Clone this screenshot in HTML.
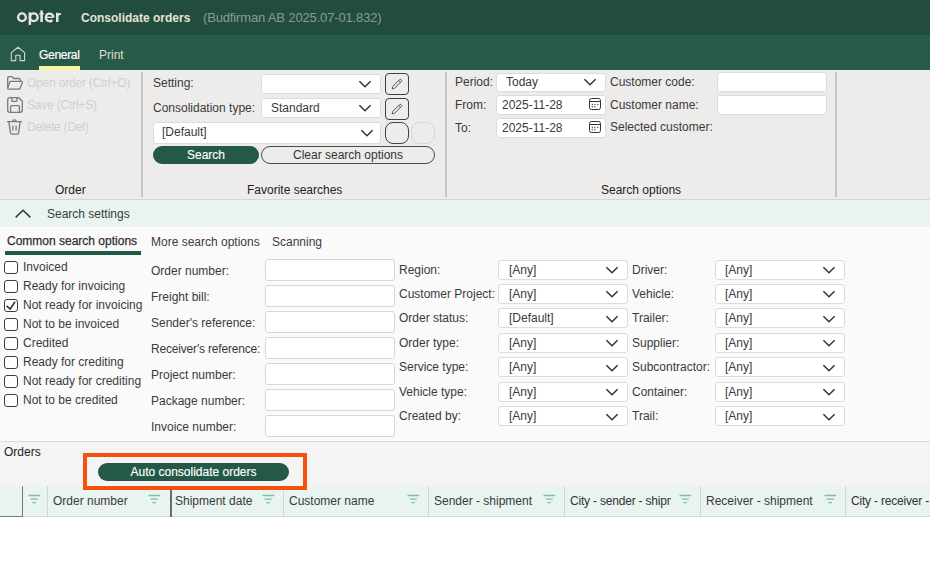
<!DOCTYPE html>
<html><head><meta charset="utf-8">
<style>
*{box-sizing:border-box;margin:0;padding:0}
html,body{width:930px;height:563px;overflow:hidden;background:#fff;font-family:"Liberation Sans",sans-serif;font-size:12px;color:#333}
.a{position:absolute;white-space:nowrap}
.box{position:absolute;border:1px solid #dcdcdc;border-radius:3px;background:#fff}
.vsep{position:absolute;width:2px;background:#c6c6c6}
svg{display:block}
</style></head><body>

<div class="a" style="left:0;top:0;width:930px;height:35px;background:#214c3e"></div>
<svg class="a" style="left:14px;top:8px" width="50" height="20" viewBox="14 8 50 20"><g fill="none" stroke="#e8e6e3"><circle cx="22" cy="17.25" r="3.85" stroke-width="2.4"/><circle cx="33.8" cy="17.25" r="3.85" stroke-width="2.4"/><path d="M53.5 17.35 A3.85 3.85 0 1 0 52.4 20.1" stroke-width="2.3"/><path d="M46 17.3 H53.6" stroke-width="1.4"/><path d="M57.25 16.2 Q57.6 13.8 61 13.8" stroke-width="1.8"/></g><g fill="#e8e6e3"><rect x="28.6" y="12.3" width="2.5" height="12.6"/><rect x="40.3" y="10.4" width="2.6" height="11.6"/><rect x="39.2" y="13" width="4.6" height="1.5"/><rect x="56" y="12.8" width="2.5" height="9.2"/></g></svg>
<div class="a" style="left:81px;top:11px;font-size:12px;line-height:14px;color:#e6e2d6;font-weight:bold">Consolidate orders</div>
<div class="a" style="left:203px;top:10px;font-size:13px;line-height:15px;color:#8a9c92;letter-spacing:-0.15px">(Budfirman AB 2025.07-01.832)</div>
<div class="a" style="left:0;top:35px;width:930px;height:35px;background:#275a48"></div>
<svg class="a" style="left:10px;top:46px" width="16" height="16" viewBox="0 0 16 16"><path d="M1.3 6.6 L8 1.2 L14.6 6.6 V14.6 H10 V9.2 H5.8 V14.6 H1.3 Z" fill="none" stroke="#d4d4d4" stroke-width="1.1" stroke-linejoin="round"/></svg>
<div class="a" style="left:39px;top:48px;font-size:12px;line-height:14px;color:#ffffff;letter-spacing:-0.3px;-webkit-text-stroke:0.2px #fff">General</div>
<div class="a" style="left:39px;top:66px;width:41px;height:4px;background:#f7f5a3"></div>
<div class="a" style="left:99px;top:48px;font-size:12px;line-height:14px;color:#e3dfcf;">Print</div>
<div class="a" style="left:0;top:70px;width:930px;height:130px;background:#edecea;border-bottom:1px solid #dad4d4"></div>
<div class="vsep" style="left:141px;top:72px;height:125px"></div>
<div class="vsep" style="left:445px;top:72px;height:125px"></div>
<div class="vsep" style="left:835px;top:72px;height:125px"></div>
<svg class="a" style="left:7px;top:76px" width="16" height="14" viewBox="0 0 16 14"><path d="M0.7 11.5 V2.2 Q0.7 0.6 2.3 0.6 H4.3 Q5.1 0.6 5.7 1.3 L6.7 2.5 H11.6 Q12.6 2.5 13.1 3.6 L13.5 4.6" fill="none" stroke="#7a7a7a" stroke-width="1.3" stroke-linejoin="round" stroke-linecap="round"/><path d="M3.7 5.3 H14.2 Q15.8 5.4 15.2 7 L13.2 12 Q12.7 13.2 11.4 13.2 H2.1 Q0.3 13.2 0.9 11.5 L2.6 6.2 Q2.9 5.3 3.7 5.3 Z" fill="none" stroke="#7a7a7a" stroke-width="1.3" stroke-linejoin="round"/></svg>
<svg class="a" style="left:7px;top:97px" width="16" height="16" viewBox="0 0 16 16"><path d="M2.8 0.7 H11.8 L15.3 4.2 V13.2 Q15.3 15.3 13.2 15.3 H2.8 Q0.7 15.3 0.7 13.2 V2.8 Q0.7 0.7 2.8 0.7 Z" fill="none" stroke="#7a7a7a" stroke-width="1.3" stroke-linejoin="round"/><path d="M4.8 0.8 V3.2 Q4.8 4.4 6 4.4 H8.8 Q10 4.4 10 3.2 V0.8" fill="none" stroke="#7a7a7a" stroke-width="1.3"/><path d="M3.6 15.2 V9.8 Q3.6 8.6 4.8 8.6 H11.2 Q12.4 8.6 12.4 9.8 V15.2" fill="none" stroke="#7a7a7a" stroke-width="1.3"/></svg>
<svg class="a" style="left:7px;top:119px" width="15" height="16" viewBox="0 0 15 16"><path d="M0.6 2.6 H14.4" fill="none" stroke="#7a7a7a" stroke-width="1.3" stroke-linecap="round"/><path d="M5.6 2.4 Q6 0.8 7.5 0.8 Q9 0.8 9.4 2.4" fill="none" stroke="#7a7a7a" stroke-width="1.2"/><path d="M1.9 2.8 L3.4 13.6 Q3.6 15.2 5.2 15.2 H9.8 Q11.4 15.2 11.6 13.6 L13.1 2.8" fill="none" stroke="#7a7a7a" stroke-width="1.3" stroke-linejoin="round"/><path d="M5.9 6.4 V11.8 M9.1 6.4 V11.8" stroke="#7a7a7a" stroke-width="1.2"/></svg>
<div class="a" style="left:27px;top:76px;font-size:12px;line-height:14px;color:#d0d0d0;letter-spacing:-0.2px">Open order (Ctrl+O)</div>
<div class="a" style="left:27px;top:98px;font-size:12px;line-height:14px;color:#d0d0d0;letter-spacing:-0.2px">Save (Ctrl+S)</div>
<div class="a" style="left:27px;top:120px;font-size:12px;line-height:14px;color:#d0d0d0;letter-spacing:-0.2px">Delete (Del)</div>
<div class="a" style="left:55px;top:183px;font-size:12px;line-height:14px;color:#1c1c24;">Order</div>
<div class="a" style="left:153px;top:76px;font-size:12px;line-height:14px;color:#3a3a3a;">Setting:</div>
<div class="box" style="left:261px;top:74px;width:120px;height:20px;background:#fff;border-color:#dcdcdc"><svg class="a" style="left:96px;top:4.8px" width="14" height="8" viewBox="0 0 14 8"><path d="M1.4 1.3 L7 6.7 L12.6 1.3" fill="none" stroke="#333" stroke-width="1.5"/></svg></div>
<div class="a" style="left:153px;top:101px;font-size:12px;line-height:14px;color:#3a3a3a;">Consolidation type:</div>
<div class="box" style="left:261px;top:98px;width:120px;height:20px;background:#fff;border-color:#dcdcdc"><div class="a" style="left:9px;top:2px;line-height:14px;color:#3a3a3a">Standard</div><svg class="a" style="left:96px;top:4.8px" width="14" height="8" viewBox="0 0 14 8"><path d="M1.4 1.3 L7 6.7 L12.6 1.3" fill="none" stroke="#333" stroke-width="1.5"/></svg></div>
<div class="box" style="left:153px;top:122px;width:228px;height:22px;background:#fff;border-color:#dcdcdc"><div class="a" style="left:8px;top:2px;line-height:14px;color:#3a3a3a">[Default]</div><svg class="a" style="left:206px;top:6px" width="14" height="8" viewBox="0 0 14 8"><path d="M1.4 1.3 L7 6.7 L12.6 1.3" fill="none" stroke="#333" stroke-width="1.5"/></svg></div>
<div class="a" style="left:385px;top:73px;width:24px;height:22px;border:1.3px solid #404040;border-radius:4px"><svg class="a" style="left:4.7px;top:3.7px" width="12" height="12" viewBox="0 0 12 12"><path d="M1.2 10.8 L1.6 8.6 L8.4 1.8 Q9.3 0.9 10.2 1.8 Q11.1 2.7 10.2 3.6 L3.4 10.4 Z" fill="none" stroke="#444" stroke-width="0.9" stroke-linejoin="round"/><path d="M7.6 2.6 L9.4 4.4" stroke="#444" stroke-width="0.8"/></svg></div>
<div class="a" style="left:385px;top:98px;width:24px;height:22px;border:1.3px solid #404040;border-radius:4px"><svg class="a" style="left:4.7px;top:3.7px" width="12" height="12" viewBox="0 0 12 12"><path d="M1.2 10.8 L1.6 8.6 L8.4 1.8 Q9.3 0.9 10.2 1.8 Q11.1 2.7 10.2 3.6 L3.4 10.4 Z" fill="none" stroke="#444" stroke-width="0.9" stroke-linejoin="round"/><path d="M7.6 2.6 L9.4 4.4" stroke="#444" stroke-width="0.8"/></svg></div>
<div class="a" style="left:385px;top:122px;width:24px;height:22px;border:1.3px solid #404040;border-radius:8px"></div>
<div class="a" style="left:411px;top:122px;width:24px;height:22px;border:1.3px solid #d6d6d6;border-radius:8px"></div>
<div class="a" style="left:153px;top:146px;width:106px;height:18px;border-radius:9px;background:#245847;color:#fff;text-align:center;line-height:19px;-webkit-text-stroke:0.15px #fff">Search</div>
<div class="a" style="left:261px;top:146px;width:174px;height:18px;border-radius:9px;border:1.2px solid #4a4a4a;color:#333;text-align:center;line-height:17px">Clear search options</div>
<div class="a" style="left:247px;top:183px;font-size:12px;line-height:14px;color:#1c1c24;">Favorite searches</div>
<div class="a" style="left:455px;top:75px;font-size:12px;line-height:14px;color:#3a3a3a;">Period:</div>
<div class="box" style="left:496px;top:72.5px;width:110px;height:19px;background:#fff;border-color:#dcdcdc"><div class="a" style="left:9px;top:1.5px;line-height:14px;color:#3a3a3a">Today</div><svg class="a" style="left:86px;top:4.6px" width="14" height="8" viewBox="0 0 14 8"><path d="M1.4 1.3 L7 6.7 L12.6 1.3" fill="none" stroke="#333" stroke-width="1.5"/></svg></div>
<div class="a" style="left:455px;top:98px;font-size:12px;line-height:14px;color:#3a3a3a;">From:</div>
<div class="box" style="left:496px;top:95px;width:110px;height:20px"><div class="a" style="left:5px;top:2px;line-height:14px;color:#3a3a3a">2025-11-28</div></div>
<svg class="a" style="left:589px;top:98px" width="12" height="12" viewBox="0 0 12 12"><rect x="0.5" y="0.5" width="11" height="11" rx="2" fill="none" stroke="#333" stroke-width="1"/><path d="M0.5 3.5 H11.5" stroke="#333" stroke-width="1"/><g fill="#555"><rect x="2.7" y="5.9" width="1.3" height="1.2"/><rect x="5.2" y="5.9" width="1.3" height="1.2"/><rect x="8" y="5.9" width="1.3" height="1.2"/><rect x="2.7" y="8.2" width="1.3" height="1.2"/><rect x="5.2" y="8.2" width="1.3" height="1.2"/></g></svg>
<div class="a" style="left:455px;top:121px;font-size:12px;line-height:14px;color:#3a3a3a;">To:</div>
<div class="box" style="left:496px;top:118px;width:110px;height:20px"><div class="a" style="left:5px;top:2px;line-height:14px;color:#3a3a3a">2025-11-28</div></div>
<svg class="a" style="left:589px;top:121px" width="12" height="12" viewBox="0 0 12 12"><rect x="0.5" y="0.5" width="11" height="11" rx="2" fill="none" stroke="#333" stroke-width="1"/><path d="M0.5 3.5 H11.5" stroke="#333" stroke-width="1"/><g fill="#555"><rect x="2.7" y="5.9" width="1.3" height="1.2"/><rect x="5.2" y="5.9" width="1.3" height="1.2"/><rect x="8" y="5.9" width="1.3" height="1.2"/><rect x="2.7" y="8.2" width="1.3" height="1.2"/><rect x="5.2" y="8.2" width="1.3" height="1.2"/></g></svg>
<div class="a" style="left:610px;top:75px;font-size:12px;line-height:14px;color:#3a3a3a;">Customer code:</div>
<div class="box" style="left:717px;top:72px;width:110px;height:19.5px"></div>
<div class="a" style="left:610px;top:98px;font-size:12px;line-height:14px;color:#3a3a3a;">Customer name:</div>
<div class="box" style="left:717px;top:95px;width:110px;height:20px"></div>
<div class="a" style="left:610px;top:120px;font-size:12px;line-height:14px;color:#3a3a3a;">Selected customer:</div>
<div class="a" style="left:601px;top:183px;font-size:12px;line-height:14px;color:#1c1c24;">Search options</div>
<div class="a" style="left:0;top:200px;width:930px;height:27px;background:#e9f3ef"></div>
<svg class="a" style="left:14px;top:208px" width="18" height="11" viewBox="0 0 18 11"><path d="M1.7 9.4 L9 2.3 L16.4 9.4" fill="none" stroke="#363636" stroke-width="1.5"/></svg>
<div class="a" style="left:47px;top:207px;font-size:12px;line-height:14px;color:#3a3a3a;">Search settings</div>
<div class="a" style="left:0;top:227px;width:930px;height:214px;background:#fafafa"></div>
<div class="a" style="left:7px;top:234px;font-size:12px;line-height:14px;color:#2e2e2e;-webkit-text-stroke:0.25px #2e2e2e">Common search options</div>
<div class="a" style="left:5px;top:251px;width:136px;height:4px;background:#1f5a46"></div>
<div class="a" style="left:151px;top:235px;font-size:12px;line-height:14px;color:#3a3a3a;">More search options</div>
<div class="a" style="left:272px;top:235px;font-size:12px;line-height:14px;color:#3a3a3a;">Scanning</div>
<div class="a" style="left:4px;top:261px;width:14px;height:13px;border:1.2px solid #3c3c3c;border-radius:3px;background:#fff"></div>
<div class="a" style="left:23px;top:260px;font-size:12px;line-height:14px;color:#3a3a3a;">Invoiced</div>
<div class="a" style="left:4px;top:280px;width:14px;height:13px;border:1.2px solid #3c3c3c;border-radius:3px;background:#fff"></div>
<div class="a" style="left:23px;top:279px;font-size:12px;line-height:14px;color:#3a3a3a;">Ready for invoicing</div>
<div class="a" style="left:4px;top:299px;width:14px;height:13px;border:1.2px solid #3c3c3c;border-radius:3px;background:#fff"><svg class="a" style="left:-1px;top:-1px" width="14" height="13" viewBox="0 0 14 13"><path d="M2.6 6.8 L6.2 10 L11 2.8" fill="none" stroke="#333" stroke-width="1.6"/></svg></div>
<div class="a" style="left:23px;top:298px;font-size:12px;line-height:14px;color:#3a3a3a;">Not ready for invoicing</div>
<div class="a" style="left:4px;top:318px;width:14px;height:13px;border:1.2px solid #3c3c3c;border-radius:3px;background:#fff"></div>
<div class="a" style="left:23px;top:317px;font-size:12px;line-height:14px;color:#3a3a3a;">Not to be invoiced</div>
<div class="a" style="left:4px;top:337px;width:14px;height:13px;border:1.2px solid #3c3c3c;border-radius:3px;background:#fff"></div>
<div class="a" style="left:23px;top:336px;font-size:12px;line-height:14px;color:#3a3a3a;">Credited</div>
<div class="a" style="left:4px;top:356px;width:14px;height:13px;border:1.2px solid #3c3c3c;border-radius:3px;background:#fff"></div>
<div class="a" style="left:23px;top:355px;font-size:12px;line-height:14px;color:#3a3a3a;">Ready for crediting</div>
<div class="a" style="left:4px;top:375px;width:14px;height:13px;border:1.2px solid #3c3c3c;border-radius:3px;background:#fff"></div>
<div class="a" style="left:23px;top:374px;font-size:12px;line-height:14px;color:#3a3a3a;">Not ready for crediting</div>
<div class="a" style="left:4px;top:394px;width:14px;height:13px;border:1.2px solid #3c3c3c;border-radius:3px;background:#fff"></div>
<div class="a" style="left:23px;top:393px;font-size:12px;line-height:14px;color:#3a3a3a;">Not to be credited</div>
<div class="a" style="left:151px;top:264px;font-size:12px;line-height:14px;color:#3a3a3a;">Order number:</div>
<div class="box" style="left:265px;top:259px;width:130px;height:22px;border-color:#d6d6d6"></div>
<div class="a" style="left:151px;top:290px;font-size:12px;line-height:14px;color:#3a3a3a;">Freight bill:</div>
<div class="box" style="left:265px;top:285px;width:130px;height:22px;border-color:#d6d6d6"></div>
<div class="a" style="left:151px;top:316px;font-size:12px;line-height:14px;color:#3a3a3a;">Sender's reference:</div>
<div class="box" style="left:265px;top:311px;width:130px;height:22px;border-color:#d6d6d6"></div>
<div class="a" style="left:151px;top:342px;font-size:12px;line-height:14px;color:#3a3a3a;letter-spacing:-0.18px">Receiver's reference:</div>
<div class="box" style="left:265px;top:337px;width:130px;height:22px;border-color:#d6d6d6"></div>
<div class="a" style="left:151px;top:368px;font-size:12px;line-height:14px;color:#3a3a3a;">Project number:</div>
<div class="box" style="left:265px;top:363px;width:130px;height:22px;border-color:#d6d6d6"></div>
<div class="a" style="left:151px;top:394px;font-size:12px;line-height:14px;color:#3a3a3a;">Package number:</div>
<div class="box" style="left:265px;top:389px;width:130px;height:22px;border-color:#d6d6d6"></div>
<div class="a" style="left:151px;top:420px;font-size:12px;line-height:14px;color:#3a3a3a;">Invoice number:</div>
<div class="box" style="left:265px;top:415px;width:130px;height:22px;border-color:#d6d6d6"></div>
<div class="a" style="left:399px;top:263px;font-size:12px;line-height:14px;color:#3a3a3a;">Region:</div>
<div class="box" style="left:498px;top:259.5px;width:130px;height:20px;background:#fff;border-color:#dcdcdc"><div class="a" style="left:10px;top:2.5px;line-height:14px;color:#3a3a3a">[Any]</div><svg class="a" style="left:106px;top:5.5px" width="14" height="8" viewBox="0 0 14 8"><path d="M1.4 1.3 L7 6.7 L12.6 1.3" fill="none" stroke="#333" stroke-width="1.5"/></svg></div>
<div class="a" style="left:632px;top:263px;font-size:12px;line-height:14px;color:#3a3a3a;">Driver:</div>
<div class="box" style="left:715px;top:259.5px;width:130px;height:20px;background:#fff;border-color:#dcdcdc"><div class="a" style="left:9px;top:2.5px;line-height:14px;color:#3a3a3a">[Any]</div><svg class="a" style="left:106px;top:5.5px" width="14" height="8" viewBox="0 0 14 8"><path d="M1.4 1.3 L7 6.7 L12.6 1.3" fill="none" stroke="#333" stroke-width="1.5"/></svg></div>
<div class="a" style="left:399px;top:287px;font-size:12px;line-height:14px;color:#3a3a3a;">Customer Project:</div>
<div class="box" style="left:498px;top:283.95px;width:130px;height:20px;background:#fff;border-color:#dcdcdc"><div class="a" style="left:10px;top:2.0500000000000114px;line-height:14px;color:#3a3a3a">[Any]</div><svg class="a" style="left:106px;top:5.5px" width="14" height="8" viewBox="0 0 14 8"><path d="M1.4 1.3 L7 6.7 L12.6 1.3" fill="none" stroke="#333" stroke-width="1.5"/></svg></div>
<div class="a" style="left:632px;top:287px;font-size:12px;line-height:14px;color:#3a3a3a;">Vehicle:</div>
<div class="box" style="left:715px;top:283.95px;width:130px;height:20px;background:#fff;border-color:#dcdcdc"><div class="a" style="left:9px;top:2.0500000000000114px;line-height:14px;color:#3a3a3a">[Any]</div><svg class="a" style="left:106px;top:5.5px" width="14" height="8" viewBox="0 0 14 8"><path d="M1.4 1.3 L7 6.7 L12.6 1.3" fill="none" stroke="#333" stroke-width="1.5"/></svg></div>
<div class="a" style="left:399px;top:311px;font-size:12px;line-height:14px;color:#3a3a3a;">Order status:</div>
<div class="box" style="left:498px;top:308.4px;width:130px;height:20px;background:#fff;border-color:#dcdcdc"><div class="a" style="left:10px;top:1.6000000000000227px;line-height:14px;color:#3a3a3a">[Default]</div><svg class="a" style="left:106px;top:5.5px" width="14" height="8" viewBox="0 0 14 8"><path d="M1.4 1.3 L7 6.7 L12.6 1.3" fill="none" stroke="#333" stroke-width="1.5"/></svg></div>
<div class="a" style="left:632px;top:311px;font-size:12px;line-height:14px;color:#3a3a3a;">Trailer:</div>
<div class="box" style="left:715px;top:308.4px;width:130px;height:20px;background:#fff;border-color:#dcdcdc"><div class="a" style="left:9px;top:1.6000000000000227px;line-height:14px;color:#3a3a3a">[Any]</div><svg class="a" style="left:106px;top:5.5px" width="14" height="8" viewBox="0 0 14 8"><path d="M1.4 1.3 L7 6.7 L12.6 1.3" fill="none" stroke="#333" stroke-width="1.5"/></svg></div>
<div class="a" style="left:399px;top:336px;font-size:12px;line-height:14px;color:#3a3a3a;">Order type:</div>
<div class="box" style="left:498px;top:332.85px;width:130px;height:20px;background:#fff;border-color:#dcdcdc"><div class="a" style="left:10px;top:2.1499999999999773px;line-height:14px;color:#3a3a3a">[Any]</div><svg class="a" style="left:106px;top:5.5px" width="14" height="8" viewBox="0 0 14 8"><path d="M1.4 1.3 L7 6.7 L12.6 1.3" fill="none" stroke="#333" stroke-width="1.5"/></svg></div>
<div class="a" style="left:632px;top:336px;font-size:12px;line-height:14px;color:#3a3a3a;">Supplier:</div>
<div class="box" style="left:715px;top:332.85px;width:130px;height:20px;background:#fff;border-color:#dcdcdc"><div class="a" style="left:9px;top:2.1499999999999773px;line-height:14px;color:#3a3a3a">[Any]</div><svg class="a" style="left:106px;top:5.5px" width="14" height="8" viewBox="0 0 14 8"><path d="M1.4 1.3 L7 6.7 L12.6 1.3" fill="none" stroke="#333" stroke-width="1.5"/></svg></div>
<div class="a" style="left:399px;top:360px;font-size:12px;line-height:14px;color:#3a3a3a;">Service type:</div>
<div class="box" style="left:498px;top:357.3px;width:130px;height:20px;background:#fff;border-color:#dcdcdc"><div class="a" style="left:10px;top:1.6999999999999886px;line-height:14px;color:#3a3a3a">[Any]</div><svg class="a" style="left:106px;top:5.5px" width="14" height="8" viewBox="0 0 14 8"><path d="M1.4 1.3 L7 6.7 L12.6 1.3" fill="none" stroke="#333" stroke-width="1.5"/></svg></div>
<div class="a" style="left:632px;top:360px;font-size:12px;line-height:14px;color:#3a3a3a;">Subcontractor:</div>
<div class="box" style="left:715px;top:357.3px;width:130px;height:20px;background:#fff;border-color:#dcdcdc"><div class="a" style="left:9px;top:1.6999999999999886px;line-height:14px;color:#3a3a3a">[Any]</div><svg class="a" style="left:106px;top:5.5px" width="14" height="8" viewBox="0 0 14 8"><path d="M1.4 1.3 L7 6.7 L12.6 1.3" fill="none" stroke="#333" stroke-width="1.5"/></svg></div>
<div class="a" style="left:399px;top:385px;font-size:12px;line-height:14px;color:#3a3a3a;">Vehicle type:</div>
<div class="box" style="left:498px;top:381.75px;width:130px;height:20px;background:#fff;border-color:#dcdcdc"><div class="a" style="left:10px;top:2.25px;line-height:14px;color:#3a3a3a">[Any]</div><svg class="a" style="left:106px;top:5.5px" width="14" height="8" viewBox="0 0 14 8"><path d="M1.4 1.3 L7 6.7 L12.6 1.3" fill="none" stroke="#333" stroke-width="1.5"/></svg></div>
<div class="a" style="left:632px;top:385px;font-size:12px;line-height:14px;color:#3a3a3a;">Container:</div>
<div class="box" style="left:715px;top:381.75px;width:130px;height:20px;background:#fff;border-color:#dcdcdc"><div class="a" style="left:9px;top:2.25px;line-height:14px;color:#3a3a3a">[Any]</div><svg class="a" style="left:106px;top:5.5px" width="14" height="8" viewBox="0 0 14 8"><path d="M1.4 1.3 L7 6.7 L12.6 1.3" fill="none" stroke="#333" stroke-width="1.5"/></svg></div>
<div class="a" style="left:399px;top:409px;font-size:12px;line-height:14px;color:#3a3a3a;">Created by:</div>
<div class="box" style="left:498px;top:406.2px;width:130px;height:20px;background:#fff;border-color:#dcdcdc"><div class="a" style="left:10px;top:1.8000000000000114px;line-height:14px;color:#3a3a3a">[Any]</div><svg class="a" style="left:106px;top:5.5px" width="14" height="8" viewBox="0 0 14 8"><path d="M1.4 1.3 L7 6.7 L12.6 1.3" fill="none" stroke="#333" stroke-width="1.5"/></svg></div>
<div class="a" style="left:632px;top:409px;font-size:12px;line-height:14px;color:#3a3a3a;">Trail:</div>
<div class="box" style="left:715px;top:406.2px;width:130px;height:20px;background:#fff;border-color:#dcdcdc"><div class="a" style="left:9px;top:1.8000000000000114px;line-height:14px;color:#3a3a3a">[Any]</div><svg class="a" style="left:106px;top:5.5px" width="14" height="8" viewBox="0 0 14 8"><path d="M1.4 1.3 L7 6.7 L12.6 1.3" fill="none" stroke="#333" stroke-width="1.5"/></svg></div>
<div class="a" style="left:0;top:441px;width:930px;height:46px;background:#f4f4f4;border-top:1px solid #dadada"></div>
<div class="a" style="left:4px;top:445px;font-size:12px;line-height:14px;color:#222;">Orders</div>
<div class="a" style="left:98px;top:463px;width:191px;height:18px;border-radius:9px;background:#245847;color:#fff;text-align:center;line-height:19px;-webkit-text-stroke:0.15px #fff">Auto consolidate orders</div>
<div class="a" style="left:0;top:486px;width:930px;height:31px;background:#e9f3ef;border-bottom:1px solid #d6d6d6"></div>
<div class="a" style="left:0;top:486px;width:23px;height:31px;border-right:1.5px solid #7a7a7a;border-bottom:1.5px solid #7a7a7a"></div>
<svg class="a" style="left:27.5px;top:494px" width="13" height="10" viewBox="0 0 13 10"><path d="M0.5 1.5 H12.2 M2.6 5.2 H9.8 M4.3 8.6 H7.9" stroke="#7fbfa2" stroke-width="1.3"/></svg>
<div class="a" style="left:47px;top:486px;width:1px;height:30px;background:#d4d4d4"></div>
<div class="a" style="left:53px;top:494px;font-size:12px;line-height:14px;color:#3a3a3a;">Order number</div>
<svg class="a" style="left:148px;top:494px" width="13" height="10" viewBox="0 0 13 10"><path d="M0.5 1.5 H12.2 M2.6 5.2 H9.8 M4.3 8.6 H7.9" stroke="#7fbfa2" stroke-width="1.3"/></svg>
<div class="a" style="left:170px;top:486px;width:2px;height:31px;background:#6c6c6c"></div>
<div class="a" style="left:175px;top:494px;font-size:12px;line-height:14px;color:#3a3a3a;">Shipment date</div>
<svg class="a" style="left:262px;top:494px" width="13" height="10" viewBox="0 0 13 10"><path d="M0.5 1.5 H12.2 M2.6 5.2 H9.8 M4.3 8.6 H7.9" stroke="#7fbfa2" stroke-width="1.3"/></svg>
<div class="a" style="left:283px;top:486px;width:1px;height:30px;background:#d4d4d4"></div>
<div class="a" style="left:289px;top:494px;font-size:12px;line-height:14px;color:#3a3a3a;">Customer name</div>
<svg class="a" style="left:407px;top:494px" width="13" height="10" viewBox="0 0 13 10"><path d="M0.5 1.5 H12.2 M2.6 5.2 H9.8 M4.3 8.6 H7.9" stroke="#7fbfa2" stroke-width="1.3"/></svg>
<div class="a" style="left:428px;top:486px;width:1px;height:30px;background:#d4d4d4"></div>
<div class="a" style="left:434px;top:494px;font-size:12px;line-height:14px;color:#3a3a3a;">Sender - shipment</div>
<svg class="a" style="left:543px;top:494px" width="13" height="10" viewBox="0 0 13 10"><path d="M0.5 1.5 H12.2 M2.6 5.2 H9.8 M4.3 8.6 H7.9" stroke="#7fbfa2" stroke-width="1.3"/></svg>
<div class="a" style="left:564px;top:486px;width:1px;height:30px;background:#d4d4d4"></div>
<div class="a" style="left:570px;top:494px;width:101px;height:16px;overflow:hidden;line-height:14px;color:#333;letter-spacing:-0.2px">City - sender - shipment</div>
<svg class="a" style="left:679px;top:494px" width="13" height="10" viewBox="0 0 13 10"><path d="M0.5 1.5 H12.2 M2.6 5.2 H9.8 M4.3 8.6 H7.9" stroke="#7fbfa2" stroke-width="1.3"/></svg>
<div class="a" style="left:700px;top:486px;width:1px;height:30px;background:#d4d4d4"></div>
<div class="a" style="left:706px;top:494px;font-size:12px;line-height:14px;color:#3a3a3a;">Receiver - shipment</div>
<svg class="a" style="left:824px;top:494px" width="13" height="10" viewBox="0 0 13 10"><path d="M0.5 1.5 H12.2 M2.6 5.2 H9.8 M4.3 8.6 H7.9" stroke="#7fbfa2" stroke-width="1.3"/></svg>
<div class="a" style="left:845px;top:486px;width:1px;height:30px;background:#d4d4d4"></div>
<div class="a" style="left:851px;top:494px;width:79px;height:16px;overflow:hidden;line-height:14px;color:#333;letter-spacing:-0.2px">City - receiver - shipment</div>
<div class="a" style="left:83px;top:453px;width:224px;height:37px;border:4px solid #f4500e"></div>
</body></html>
